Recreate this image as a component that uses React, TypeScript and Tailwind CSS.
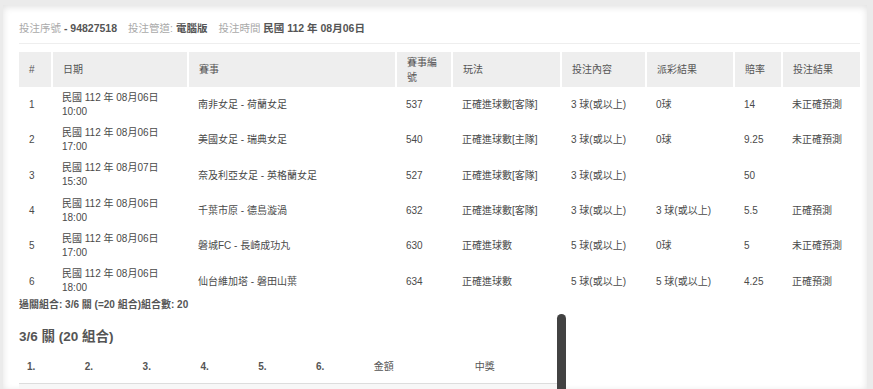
import React from "react";

const font = { fontFamily: '"Liberation Sans", "Noto Sans CJK TC", sans-serif' };

const rows = [
  { no: 1, date: "民國 112 年 08月06日", time: "10:00", match: "南非女足 - 荷蘭女足", code: "537", play: "正確進球數[客隊]", bet: "3 球(或以上)", payout: "0球", odds: "14", result: "未正確預測" },
  { no: 2, date: "民國 112 年 08月06日", time: "17:00", match: "美國女足 - 瑞典女足", code: "540", play: "正確進球數[主隊]", bet: "3 球(或以上)", payout: "0球", odds: "9.25", result: "未正確預測" },
  { no: 3, date: "民國 112 年 08月07日", time: "15:30", match: "奈及利亞女足 - 英格蘭女足", code: "527", play: "正確進球數[客隊]", bet: "3 球(或以上)", payout: "", odds: "50", result: "" },
  { no: 4, date: "民國 112 年 08月06日", time: "18:00", match: "千葉市原 - 德島漩渦", code: "632", play: "正確進球數[客隊]", bet: "3 球(或以上)", payout: "3 球(或以上)", odds: "5.5", result: "正確預測" },
  { no: 5, date: "民國 112 年 08月06日", time: "17:00", match: "磐城FC - 長崎成功丸", code: "630", play: "正確進球數", bet: "5 球(或以上)", payout: "0球", odds: "5", result: "未正確預測" },
  { no: 6, date: "民國 112 年 08月06日", time: "18:00", match: "仙台維加塔 - 磐田山葉", code: "634", play: "正確進球數", bet: "5 球(或以上)", payout: "5 球(或以上)", odds: "4.25", result: "正確預測" },
];

const headers = [
  { label: "#", w: "w-[33px]" },
  { label: "日期", w: "w-[136px]" },
  { label: "賽事", w: "w-[208px]" },
  { label: "賽事編號", w: "w-[56px]" },
  { label: "玩法", w: "w-[109px]" },
  { label: "投注內容", w: "w-[85px]" },
  { label: "派彩結果", w: "w-[88px]" },
  { label: "賠率", w: "w-[48px]" },
  { label: "投注結果", w: "" },
];

export default function App() {
  return (
    <div className="h-screen w-full overflow-hidden bg-[#ebebeb] pt-[5px] pl-[3px] pr-[6px]" style={font}>
      <div className="relative h-full bg-white pl-[16px] pr-[7px] pt-[16px] shadow-[inset_0_2px_7px_rgba(0,0,0,0.12)] text-[10px] text-[#4a4a4a]">
        {/* bet info */}
        <div className="flex items-center gap-[11px] text-[10.5px] leading-[14px]">
          <span>
            <span className="text-[#aaa]">投注序號</span>
            <span className="font-bold text-[#555]"> - 94827518</span>
          </span>
          <span>
            <span className="text-[#aaa]">投注管道: </span>
            <span className="font-bold text-[#555]">電腦版</span>
          </span>
          <span>
            <span className="text-[#aaa]">投注時間 </span>
            <span className="font-bold text-[#555]">民國 112 年 08月06日</span>
          </span>
        </div>
        <div className="mt-[8px] h-px bg-[#eeeeee]" />

        <table className="mt-[8px] w-full table-fixed border-collapse">
          <thead>
            <tr className="h-[35px] bg-[#eeeeee] text-[#555]">
              {headers.map((h, i) => (
                <th
                  key={h.label}
                  className={`${h.w} px-[10px] text-left align-middle font-normal leading-[15px] ${
                    i > 0 ? "border-l-2 border-white" : ""
                  }`}
                >
                  {h.label}
                </th>
              ))}
            </tr>
          </thead>
          <tbody>
            {rows.map((r) => (
              <tr key={r.no} className="h-[35.3px]">
                <td className="px-[10px] align-middle">{r.no}</td>
                <td className="px-[10px] align-middle leading-[14px]">
                  <div>{r.date}</div>
                  <div>{r.time}</div>
                </td>
                <td className="px-[10px] align-middle">{r.match}</td>
                <td className="px-[10px] align-middle">{r.code}</td>
                <td className="px-[10px] align-middle">{r.play}</td>
                <td className="px-[10px] align-middle">{r.bet}</td>
                <td className="px-[10px] align-middle">{r.payout}</td>
                <td className="px-[10px] align-middle">{r.odds}</td>
                <td className="px-[10px] align-middle">{r.result}</td>
              </tr>
            ))}
          </tbody>
        </table>

        <div className="leading-[10px] pt-[1px] font-bold text-[#555]">過關組合: 3/6 關 (=20 組合)組合數: 20</div>

        <div className="relative w-[547px]">
          <h3 className="mt-[19px] text-[13.5px] font-bold leading-[16px] text-[#555]">3/6 關 (20 組合)</h3>
          <div className="mt-[14px] flex h-[25px] items-start border-b border-[#dddddd] pl-[8px] font-bold text-[#555]">
            {["1.", "2.", "3.", "4.", "5.", "6."].map((n) => (
              <span key={n} className="w-[57.8px]">{n}</span>
            ))}
            <span className="w-[101px] font-normal">金額</span>
            <span className="font-normal">中獎</span>
          </div>
          <div className="h-[20px] bg-[#f7f7f7]" />
          {/* scrollbar thumb */}
          <div className="absolute right-0 top-[-15px] h-[100px] w-[9px] rounded-t-[5px] bg-[#424242]" />
        </div>
      </div>
    </div>
  );
}
